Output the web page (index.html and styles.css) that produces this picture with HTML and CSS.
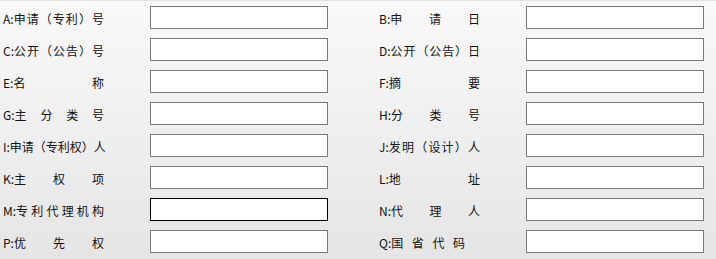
FILE: index.html
```html
<!DOCTYPE html>
<html lang="zh-CN">
<head>
    <meta charset="UTF-8">
    <title>专利检索</title>
    <link rel="stylesheet" href="styles.css">
</head>
<body>
    <div class="search-form">
        <div class="field"><label class="label"><span class="key">A:</span><span class="name">申请（专利）号</span></label><input type="text"></div>
        <div class="field"><label class="label"><span class="key">B:</span><span class="name">申请日</span></label><input type="text"></div>
        <div class="field"><label class="label"><span class="key">C:</span><span class="name">公开（公告）号</span></label><input type="text"></div>
        <div class="field"><label class="label"><span class="key">D:</span><span class="name">公开（公告）日</span></label><input type="text"></div>
        <div class="field"><label class="label"><span class="key">E:</span><span class="name">名称</span></label><input type="text"></div>
        <div class="field"><label class="label"><span class="key">F:</span><span class="name">摘要</span></label><input type="text"></div>
        <div class="field"><label class="label"><span class="key">G:</span><span class="name">主分类号</span></label><input type="text"></div>
        <div class="field"><label class="label"><span class="key">H:</span><span class="name">分类号</span></label><input type="text"></div>
        <div class="field"><label class="label"><span class="key">I:</span><span class="name">申请（专利权）人</span></label><input type="text"></div>
        <div class="field"><label class="label"><span class="key">J:</span><span class="name">发明（设计）人</span></label><input type="text"></div>
        <div class="field"><label class="label"><span class="key">K:</span><span class="name">主权项</span></label><input type="text"></div>
        <div class="field"><label class="label"><span class="key">L:</span><span class="name">地址</span></label><input type="text"></div>
        <div class="field"><label class="label"><span class="key">M:</span><span class="name">专利代理机构</span></label><input type="text" class="active"></div>
        <div class="field"><label class="label"><span class="key">N:</span><span class="name">代理人</span></label><input type="text"></div>
        <div class="field"><label class="label"><span class="key">P:</span><span class="name">优先权</span></label><input type="text"></div>
        <div class="field"><label class="label short"><span class="key">Q:</span><span class="name">国省代码</span></label><input type="text"></div>
    </div>
</body>
</html>
```

FILE: styles.css
```css
html, body {
    height: 100%;
}
body {
    margin: 0;
    border-top: 1px solid #e2e2e2;
    box-sizing: border-box;
    background: linear-gradient(#f9f9f9, #e5e5e5);
    font-family: "Noto Sans CJK SC", "Liberation Sans", sans-serif;
    font-size: 12px;
    color: #111;
    overflow: hidden;
}
.search-form {
    display: grid;
    grid-template-columns: 376px 1fr;
    grid-auto-rows: 32px;
    padding-left: 3px;
}
.field {
    display: flex;
    align-items: flex-start;
}
.label {
    display: flex;
    width: 101px;
    margin-right: 46px;
    margin-top: 10px;
    line-height: 16px;
    white-space: nowrap;
}
.label.short {
    width: 86px;
    margin-right: 61px;
}
.label .name {
    flex: 1;
    text-align: justify;
    text-align-last: justify;
    text-justify: inter-character;
}
.field input {
    width: 178px;
    height: 23px;
    margin: 5px 0 0;
    padding: 0 3px;
    box-sizing: border-box;
    border: 1px solid #7a7a7a;
    background: #fff;
    font-family: inherit;
    font-size: 12px;
    outline: none;
}
.field input.active {
    border-color: #000;
}
```
